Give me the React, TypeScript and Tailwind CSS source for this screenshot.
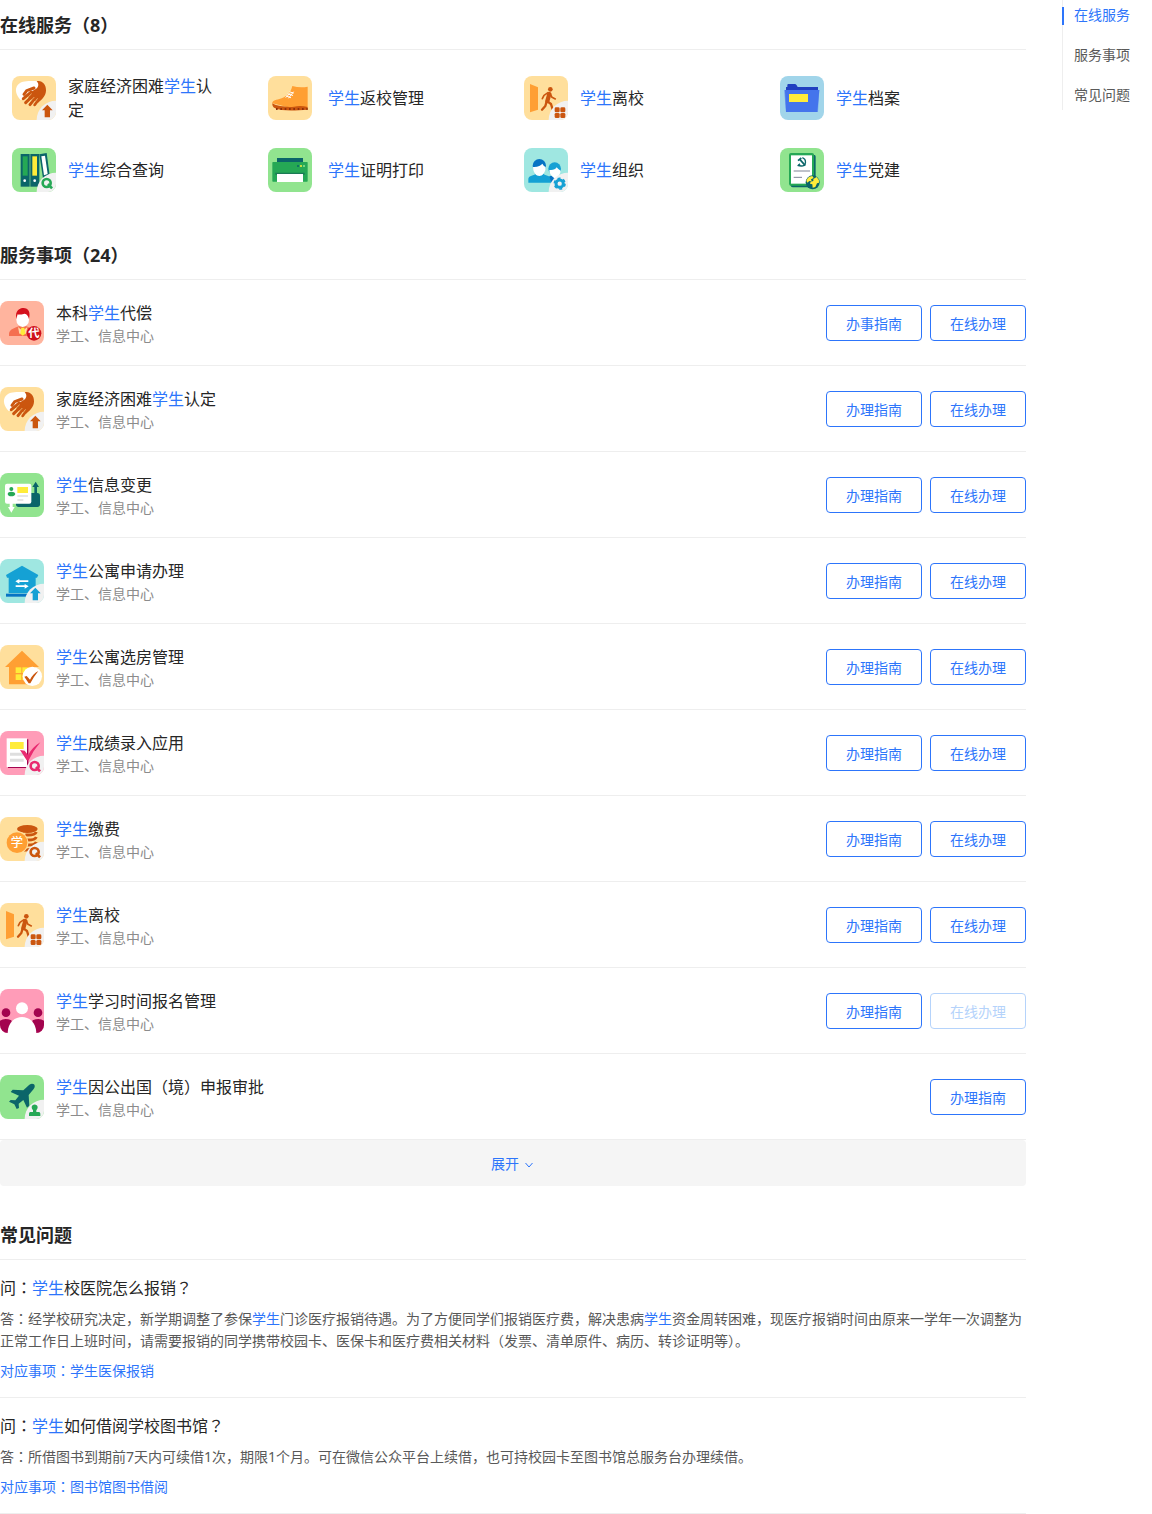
import type { ReactNode } from "react";

type IconName =
  | "hand" | "boot" | "exit" | "folder" | "binders" | "printer" | "group" | "party"
  | "agent" | "idcard" | "dorm" | "house" | "grade" | "coins" | "people" | "plane";

const ORANGE = "#ff9f33";
const BROWN = "#cb560f";
const GREEN = "#25a855";
const TEAL = "#0b6569";
const BLUE = "#15a1d4";
const YELLOW = "#ffec3a";

const Corner = () => <circle cx="132" cy="132" r="58" fill="#f1f1f1" />;
const UpArrow = ({ fill }: { fill: string }) => (
  <path d="M106 86 L122 103 H114 V124 H98 V103 H90 Z" fill={fill} />
);
const Lens = ({ color }: { color: string }) => (
  <g stroke={color} fill="none">
    <circle cx="104" cy="105" r="12" strokeWidth="8" />
    <path d="M108 108 L120 121" strokeWidth="8" />
  </g>
);
const Walker = () => (
  <g>
    <path d="M18 24 L42 34 V101 L18 109 Z" fill={ORANGE} />
    <circle cx="79" cy="40" r="7" fill={BROWN} />
    <g fill="none" stroke={BROWN} strokeLinecap="round" strokeLinejoin="round">
      <path d="M76 54 L70 75" strokeWidth="13" />
      <path d="M72 50 L60 58 L55 68" strokeWidth="5" />
      <path d="M78 52 L84 64 L94 69" strokeWidth="5" />
      <path d="M68 76 L64 90 L54 101" strokeWidth="7" />
      <path d="M70 76 L81 84 L86 100" strokeWidth="7" />
    </g>
    <Corner />
    <g fill={BROWN}>
      <rect x="92" y="94" width="15" height="15" rx="4" />
      <rect x="109" y="94" width="15" height="15" rx="4" />
      <rect x="92" y="111" width="15" height="15" rx="4" />
      <rect x="109" y="111" width="15" height="15" rx="4" />
    </g>
  </g>
);

const icons: Record<IconName, { bg: string; art: ReactNode }> = {
  hand: {
    bg: "bg-[#ffdf9c]",
    art: (
      <>
        <path d="M78 16 C50 14 28 14 17 27 C7 40 12 58 26 72 L70 50 L90 20 Z" fill="#fff" />
        <path d="M74 16 C90 12 103 26 102 44 C101 60 90 70 78 80 L50 66 L46 56 L66 42 C78 38 84 26 74 16 Z" fill={BROWN} />
        <g stroke={BROWN} strokeWidth="9" strokeLinecap="round" fill="none">
          <path d="M66 36 L44 44 L36 55" />
          <path d="M58 48 L34 68" />
          <path d="M66 56 L41 80" />
          <path d="M74 60 L54 86" />
          <path d="M84 64 L68 86" />
        </g>
        <g stroke="#ffdf9c" strokeWidth="2" strokeLinecap="round">
          <path d="M58 54 L36 75" />
          <path d="M66 64 L47 84" />
          <path d="M76 68 L61 88" />
        </g>
        <Corner />
        <UpArrow fill={BROWN} />
      </>
    ),
  },
  boot: {
    bg: "bg-[#ffdf9c]",
    art: (
      <>
        <path d="M73 30 Q96 36 119 32 V94 H60 L13 82 C12 76 20 72 34 69 C54 64 68 52 73 30 Z" fill={ORANGE} />
        <path d="M13 82 C30 92 60 94 78 92 Q98 88 119 93 V101 C80 104 40 106 20 96 Q12 92 13 82 Z" fill={BROWN} />
        <path d="M24 99 H119" stroke="#8f2f0a" strokeWidth="6" strokeDasharray="5 8" />
        <g stroke="#fff" strokeWidth="3" strokeLinecap="round" fill="none">
          <path d="M66 48 L76 51 M60 54 L74 58 M55 60 L68 65 M62 66 L76 48 M54 64 L66 52" />
        </g>
      </>
    ),
  },
  exit: { bg: "bg-[#ffdf9c]", art: <Walker /> },
  folder: {
    bg: "bg-[#a1d5ea]",
    art: (
      <>
        <path d="M22 27 Q22 24 25 24 H44 Q48 24 50 28 L53 33 H114 V50 H18 V33 H22 Z" fill="#2140c0" />
        <path d="M12 42 H118 L114 108 H18 Z" fill="#76a6ee" />
        <path d="M15 42 H118 L112 108 H18 Z" fill="#4474ec" />
        <rect x="27" y="54" width="57" height="24" fill={YELLOW} />
      </>
    ),
  },
  binders: {
    bg: "bg-[#91e48f]",
    art: (
      <>
        <g fill={TEAL}>
          <rect x="26" y="18" width="27" height="98" />
          <rect x="55" y="18" width="27" height="98" />
          <path d="M82 19 L104 15 L114 90 L94 98 Z" />
        </g>
        <rect x="32" y="25" width="15" height="58" fill={GREEN} />
        <rect x="61" y="25" width="14" height="58" fill={YELLOW} />
        <path d="M88 25 L99 23 L107 78 L96 82 Z" fill="#fff" />
        <circle cx="38" cy="98" r="4" fill="#fff" />
        <circle cx="68" cy="98" r="4" fill="#fff" />
        <Corner />
        <Lens color={GREEN} />
      </>
    ),
  },
  printer: {
    bg: "bg-[#91e48f]",
    art: (
      <>
        <rect x="27" y="30" width="78" height="15" fill={TEAL} />
        <rect x="13" y="42" width="106" height="59" rx="2" fill={GREEN} />
        <path d="M22 74 H110 V80 H22 Z" fill="#1b7a55" />
        <rect x="27" y="78" width="78" height="24" fill="#fff" />
        <circle cx="90" cy="54" r="3" fill={TEAL} />
        <circle cx="99" cy="54" r="3" fill={YELLOW} />
        <circle cx="108" cy="54" r="3" fill="#91e48f" />
      </>
    ),
  },
  group: {
    bg: "bg-[#9fe7e1]",
    art: (
      <>
        <path d="M13 104 V92 C15 82 34 82 38 76 H56 C62 84 80 82 82 94 V104 Z" fill={BLUE} />
        <path d="M76 84 L100 82 L112 92 L90 104 H82 Z" fill="#0774c4" />
        <circle cx="92" cy="62" r="19" fill={BLUE} />
        <path d="M76 66 Q92 68 98 58 Q104 66 110 68 C108 82 100 88 93 91 C84 86 76 78 76 66 Z" fill="#fff" />
        <circle cx="46" cy="53" r="20" fill="#0774c4" />
        <path d="M27 57 C42 58 50 52 55 47 Q60 56 65 57 C65 74 55 84 46 84 S27 74 27 57 Z" fill="#fff" />
        <Corner />
        <circle cx="107" cy="107" r="11" fill="none" stroke={BLUE} strokeWidth="9" />
        <circle cx="107" cy="107" r="16" fill="none" stroke={BLUE} strokeWidth="5" strokeDasharray="9 7.76" />
      </>
    ),
  },
  party: {
    bg: "bg-[#91e48f]",
    art: (
      <>
        <rect x="32" y="20" width="75" height="98" rx="6" fill={TEAL} />
        <rect x="27" y="15" width="75" height="98" rx="6" fill={GREEN} />
        <rect x="33" y="22" width="63" height="85" fill="#fff" />
        <g fill="none" stroke={TEAL} strokeWidth="4">
          <path d="M67 29 C80 34 80 54 64 54 Q58 54 54 50 M53 54 L60 47" />
          <path d="M54 38 L64 30 M60 35 L76 53" strokeWidth="5" />
        </g>
        <path d="M41 69 H90 M41 88 H66" stroke="#7f8594" strokeWidth="3" />
        <circle cx="98" cy="103" r="21" fill={TEAL} />
        <path d="M79 98 Q84 85 97 84 L101 90 L93 94 L95 100 L88 99 L82 104 Z M100 93 L110 87 Q118 94 117 104 L111 106 L106 117 L98 119 L97 109 L90 107 L92 101 L100 99 Z" fill={YELLOW} />
      </>
    ),
  },
  agent: {
    bg: "bg-[#ffb49e]",
    art: (
      <>
        <path d="M27 105 V98 C28 84 48 80 56 76 H80 C90 82 106 84 108 98 V105 Z" fill="#f56f50" />
        <path d="M54 78 L68 90 L82 78 L78 98 H58 Z" fill="#ffd9a8" />
        <path d="M64 80 H73 L76 98 L68 104 L61 98 Z" fill={YELLOW} />
        <ellipse cx="68" cy="56" rx="19" ry="22" fill="#fff" />
        <path d="M49 54 C44 28 60 21 70 21 C86 21 92 34 87 54 Q84 40 74 38 Q58 42 52 40 Z" fill="#d4111d" />
        <circle cx="102" cy="97" r="22" fill="#cf101c" />
        <text x="102" y="109" textAnchor="middle" fontSize="34" fontWeight="700" fill="#fff">代</text>
      </>
    ),
  },
  idcard: {
    bg: "bg-[#91e48f]",
    art: (
      <>
        <rect x="48" y="60" width="72" height="42" rx="8" fill={TEAL} />
        <path d="M107 26 L117 42 H111 V62 H103 V42 H97 Z" fill={TEAL} />
        <rect x="15" y="32" width="79" height="60" rx="6" fill="#fff" />
        <circle cx="34" cy="48" r="6" fill={GREEN} />
        <path d="M23 63 Q24 56 34 56 T46 63 Q44 70 34 70 T23 63 Z" fill={GREEN} />
        <rect x="52" y="42" width="32" height="18" fill={YELLOW} />
        <path d="M52 69 H84 M52 81 H70" stroke="#dedede" strokeWidth="5" />
        <path d="M29 90 H38 V102 H44 L34 119 L24 102 H29 Z" fill="#fff" />
      </>
    ),
  },
  dorm: {
    bg: "bg-[#9fe7e1]",
    art: (
      <>
        <path d="M66 20 L115 48 L111 56 H107 V102 H26 V56 H21 L18 48 Z" fill={BLUE} />
        <rect x="18" y="104" width="90" height="9" fill="#0774c4" />
        <g fill="#fff">
          <path d="M46 67 L58 60 V64 H85 V69 H58 V74 Z" />
          <path d="M86 82 L74 75 V79 H47 V84 H74 V89 Z" />
        </g>
        <Corner />
        <UpArrow fill={BLUE} />
      </>
    ),
  },
  house: {
    bg: "bg-[#ffdf9c]",
    art: (
      <>
        <path d="M66 17 L117 66 H106 V118 H27 V66 H15 Z" fill={ORANGE} />
        <g fill={YELLOW}>
          <rect x="47" y="67" width="17" height="17" />
          <rect x="67" y="67" width="17" height="17" />
          <rect x="47" y="88" width="17" height="17" />
          <rect x="67" y="88" width="17" height="17" />
        </g>
        <circle cx="97" cy="94" r="29" fill="#fff" />
        <path d="M73 95 L80 93 L90 104 Q99 86 115 78 Q102 94 91 115 H86 Z" fill={BROWN} />
      </>
    ),
  },
  grade: {
    bg: "bg-[#ff9cb8]",
    art: (
      <>
        <rect x="24" y="25" width="61" height="86" fill="#a3044f" />
        <rect x="20" y="22" width="61" height="86" fill="#fff" />
        <rect x="30" y="33" width="41" height="21" fill={YELLOW} />
        <path d="M30 70 H71 M30 88 H71" stroke="#dedede" strokeWidth="9" />
        <path d="M60 57 L74 59 L84 72 Q98 48 121 34 Q100 58 86 88 H80 Z" fill="#e92b70" />
        <Corner />
        <Lens color="#e92b70" />
      </>
    ),
  },
  coins: {
    bg: "bg-[#ffdf9c]",
    art: (
      <>
        <ellipse cx="82" cy="36" rx="31" ry="12" fill={BROWN} />
        <g fill="none" stroke={BROWN} strokeWidth="9">
          <path d="M109 45 Q104 56 76 54" />
          <path d="M109 60 Q104 71 76 69" />
          <path d="M109 75 Q104 86 76 84" />
          <path d="M104 91 Q96 100 72 99" />
        </g>
        <circle cx="51" cy="77" r="34" fill="#ffdf9c" />
        <circle cx="51" cy="77" r="31" fill={ORANGE} />
        <text x="51" y="90" textAnchor="middle" fontSize="37" fontWeight="500" fill="#fff">学</text>
        <Corner />
        <Lens color={BROWN} />
      </>
    ),
  },
  people: {
    bg: "bg-[#ff9cb8]",
    art: (
      <>
        <g fill="#a3044f">
          <circle cx="18" cy="71" r="13" />
          <circle cx="114" cy="71" r="13" />
          <path d="M0 132 V95 Q14 86 34 94 L44 132 Z M132 132 V95 Q118 86 98 94 L88 132 Z" />
        </g>
        <circle cx="66" cy="58" r="18" fill="#fff" />
        <path d="M23 132 C24 98 46 84 66 84 S108 98 109 132 Z" fill="#fff" />
      </>
    ),
  },
  plane: {
    bg: "bg-[#91e48f]",
    art: (
      <>
        <path
          d="M102 28 Q107 34 101 42 L86 60 L88 92 L81 98 L70 75 L56 86 L57 99 L50 102 L43 88 L27 80 L32 75 L46 76 L57 62 L32 51 L38 44 L70 46 L88 29 Q96 24 102 28 Z"
          fill={TEAL}
        />
        <Corner />
        <path d="M95 97 C95 86 113 86 113 97 Q113 102 109 106 V111 H117 Q121 111 121 116 V123 H87 V116 Q87 111 91 111 H99 V106 Q95 102 95 97 Z" fill={GREEN} />
      </>
    ),
  },
};

const AppIcon = ({ name }: { name: IconName }) => (
  <svg viewBox="0 0 132 132" aria-hidden="true" className={`size-11 shrink-0 rounded-lg ${icons[name].bg}`}>
    {icons[name].art}
  </svg>
);

/* Splits a text so that the keyword is highlighted and centred punctuation uses its own face. */
const Rich = ({ text, plain = false }: { text: string; plain?: boolean }) => (
  <>
    {text.split(/(学生|[：？（）])/).map((part, i) => {
      if (part === "学生" && !plain) return <span key={i} className="text-[#2d75fb]">{part}</span>;
      if (/^[：？（）]$/.test(part))
        return <span key={i} className="font-['Noto_Sans','Noto_Sans_CJK_TC',sans-serif]">{part}</span>;
      return part;
    })}
  </>
);

const online: { icon: IconName; name: string; wide?: boolean }[] = [
  { icon: "hand", name: "家庭经济困难学生认定" },
  { icon: "boot", name: "学生返校管理", wide: true },
  { icon: "exit", name: "学生离校" },
  { icon: "folder", name: "学生档案" },
  { icon: "binders", name: "学生综合查询" },
  { icon: "printer", name: "学生证明打印", wide: true },
  { icon: "group", name: "学生组织" },
  { icon: "party", name: "学生党建" },
];

const items: { icon: IconName; name: string; guide?: string; apply?: "on" | "off" | "none" }[] = [
  { icon: "agent", name: "本科学生代偿", guide: "办事指南" },
  { icon: "hand", name: "家庭经济困难学生认定" },
  { icon: "idcard", name: "学生信息变更" },
  { icon: "dorm", name: "学生公寓申请办理" },
  { icon: "house", name: "学生公寓选房管理" },
  { icon: "grade", name: "学生成绩录入应用" },
  { icon: "coins", name: "学生缴费" },
  { icon: "exit", name: "学生离校" },
  { icon: "people", name: "学生学习时间报名管理", apply: "off" },
  { icon: "plane", name: "学生因公出国（境）申报审批", apply: "none" },
];

const faqs = [
  {
    q: "问：学生校医院怎么报销？",
    a: "答：经学校研究决定，新学期调整了参保学生门诊医疗报销待遇。为了方便同学们报销医疗费，解决患病学生资金周转困难，现医疗报销时间由原来一学年一次调整为正常工作日上班时间，请需要报销的同学携带校园卡、医保卡和医疗费相关材料（发票、清单原件、病历、转诊证明等）。",
    link: "对应事项：学生医保报销",
  },
  {
    q: "问：学生如何借阅学校图书馆？",
    a: "答：所借图书到期前7天内可续借1次，期限1个月。可在微信公众平台上续借，也可持校园卡至图书馆总服务台办理续借。",
    link: "对应事项：图书馆图书借阅",
  },
];

const Heading = ({ id, children }: { id: string; children: ReactNode }) => (
  <h2 id={id} className="border-b border-[#eeeeee] pt-[13px] pb-[11px] text-lg leading-[25px] font-bold text-[#262626]">
    {children}
  </h2>
);

const ActionButton = ({ label, disabled = false }: { label: string; disabled?: boolean }) => (
  <button
    type="button"
    disabled={disabled}
    className="h-9 w-24 rounded border border-[#2d75fb] pt-0.5 text-sm text-[#2d75fb] disabled:border-[#b5d3fb] disabled:text-[#b5d3fb]"
  >
    {label}
  </button>
);

export default function App() {
  return (
    <div className="flex items-start bg-white font-['Noto_Sans','Noto_Sans_CJK_SC',sans-serif] text-[#262626]">
      <main className="min-w-0 flex-1">
        <section>
          <Heading id="online">在线服务（8）</Heading>
          <ul className="grid grid-cols-4 gap-y-6 pt-6 pr-0.5">
            {online.map((s) => (
              <li key={s.name} className="flex h-12 items-center pl-3">
                <AppIcon name={s.icon} />
                <a href="#online" className={`w-[156px] text-base leading-6 ${s.wide ? "ml-4" : "ml-3"}`}>
                  <Rich text={s.name} />
                </a>
              </li>
            ))}
          </ul>
        </section>

        <section className="pt-9">
          <Heading id="items">服务事项（24）</Heading>
          <ul>
            {items.map((it) => (
              <li key={it.name} className="flex h-[86px] items-center gap-3 border-b border-[#eeeeee]">
                <AppIcon name={it.icon} />
                <div className="min-w-0 flex-1 pt-0.5">
                  <h3 className="text-base leading-6"><Rich text={it.name} /></h3>
                  <p className="text-sm leading-[22px] text-[#8c8c8c]">学工、信息中心</p>
                </div>
                <div className="flex gap-2">
                  <ActionButton label={it.guide ?? "办理指南"} />
                  {it.apply !== "none" && <ActionButton label="在线办理" disabled={it.apply === "off"} />}
                </div>
              </li>
            ))}
          </ul>
          <button type="button" className="flex h-[46px] w-full items-center justify-center gap-1.5 rounded bg-[#f5f5f5] pt-0.5 pr-0.5 text-sm text-[#2d75fb]">
            展开
            <svg viewBox="0 0 8 8" aria-hidden="true" className="mt-0.5 size-2 fill-none stroke-current">
              <path d="M0.5 2 L4 6 L7.5 2" />
            </svg>
          </button>
        </section>

        <section className="pt-6">
          <Heading id="faq">常见问题</Heading>
          {faqs.map((f) => (
            <article key={f.q} className="border-b border-[#eeeeee] pt-4 pb-[15px]">
              <h3 className="text-base leading-6"><Rich text={f.q} /></h3>
              <p className="mt-2 text-sm leading-[22px] text-[#595959]"><Rich text={f.a} /></p>
              <a href="#faq" className="mt-2 block text-sm leading-[22px] text-[#2d75fb]"><Rich text={f.link} plain /></a>
            </article>
          ))}
        </section>
      </main>

      <nav className="ml-9 w-[90px] border-l border-[#eeeeee] text-sm text-[#595959]">
        <ul className="flex flex-col gap-2.5">
          <li className="relative">
            <span className="absolute top-[7px] -left-px h-[18px] w-0.5 bg-[#2d75fb]" />
            <a href="#online" className="block pl-[11px] leading-[30px] text-[#2d75fb]">在线服务</a>
          </li>
          <li><a href="#items" className="block pl-[11px] leading-[30px]">服务事项</a></li>
          <li><a href="#faq" className="block pl-[11px] leading-[30px]">常见问题</a></li>
        </ul>
      </nav>
    </div>
  );
}
